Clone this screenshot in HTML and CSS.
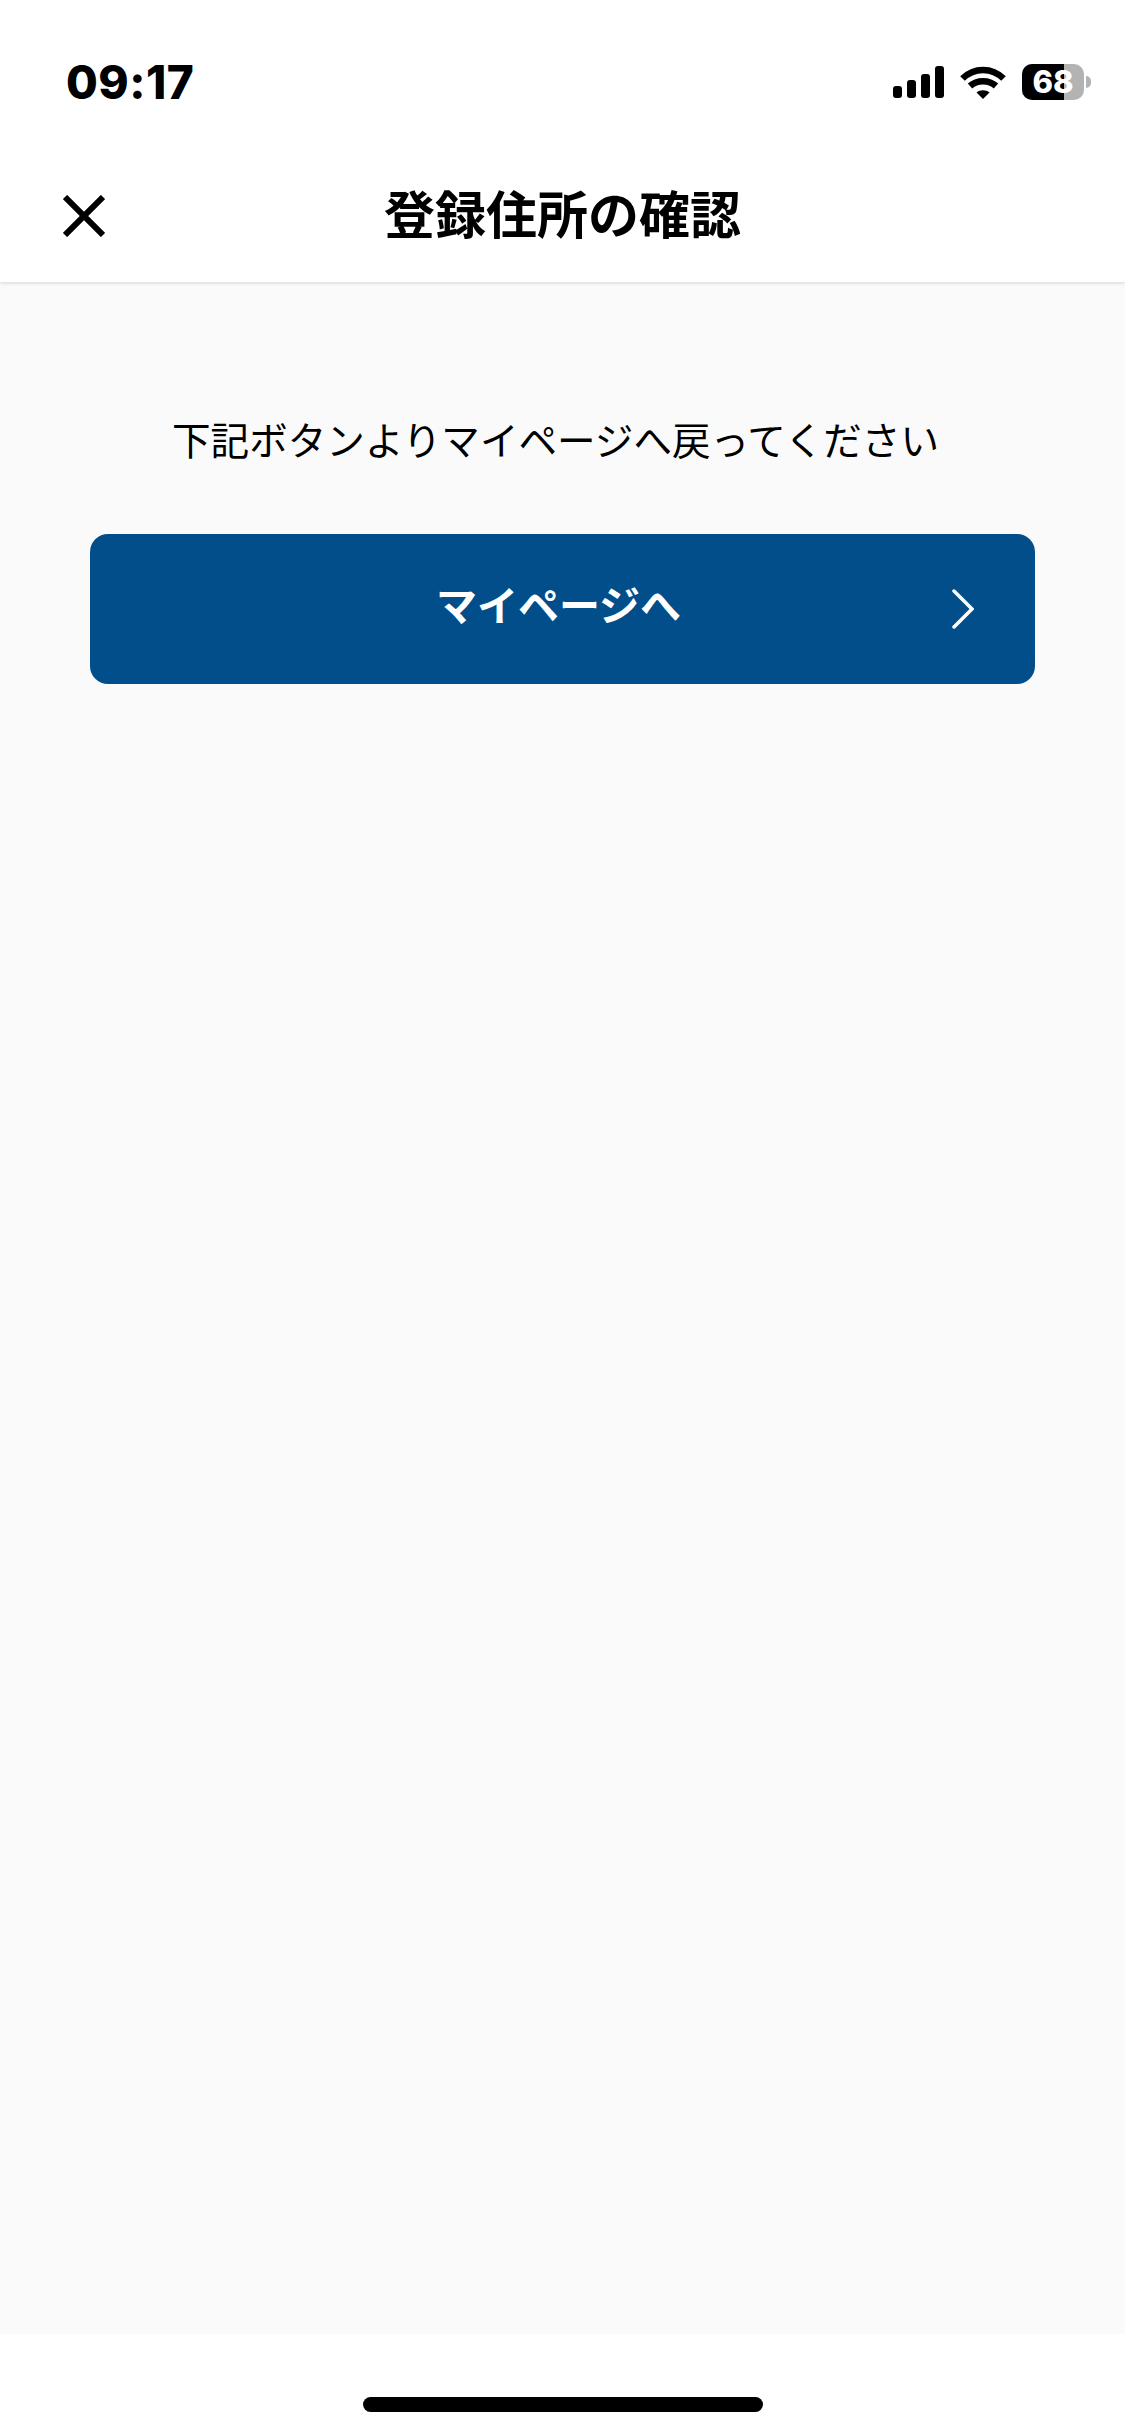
FILE: index.html
```html
<!DOCTYPE html>
<html lang="ja">
<head>
  <meta charset="UTF-8">
  <meta name="viewport" content="width=device-width, initial-scale=1.0">
  <title>登録住所の確認</title>
  <link rel="stylesheet" href="styles.css">
</head>
<body>
  <header class="top">
    <div class="status">
      <span class="time">09:17</span>
      <div class="status-icons">
        <svg class="signal" width="51" height="32" viewBox="0 0 51 32" fill="#000">
          <rect x="0" y="20" width="9" height="12" rx="3"/>
          <rect x="14" y="14" width="9" height="18" rx="3"/>
          <rect x="28" y="8" width="9" height="24" rx="3"/>
          <rect x="42" y="0" width="9" height="32" rx="3"/>
        </svg>
        <svg class="wifi" width="46" height="33" viewBox="0 0 46 33" fill="none" stroke="#000" stroke-width="6.5">
          <path d="M2.5 12.5C14 1 32 1 43.5 12.5"/>
          <path d="M10 20C17 13.5 29 13.5 36 20"/>
          <path d="M16.5 26.5C20 23.5 26 23.5 29.5 26.5L23 33Z" fill="#000" stroke="none"/>
        </svg>
        <div class="battery">
          <div class="battery-body">
            <div class="battery-fill"></div>
            <span class="battery-num">68</span>
          </div>
          <div class="battery-nub"></div>
        </div>
      </div>
    </div>
    <div class="nav">
      <svg class="close" width="42" height="42" viewBox="0 0 42 42" stroke="#000" stroke-width="6">
        <path d="M2 2L40 40M40 2L2 40"/>
      </svg>
      <h1 class="title">登録住所の確認</h1>
    </div>
  </header>

  <main class="content">
    <p class="message">下記ボタンよりマイページへ戻ってください</p>
    <a class="btn" href="#">
      <span class="btn-label">マイページへ</span>
      <svg class="chevron" width="22" height="40" viewBox="0 0 22 40" fill="none" stroke="#fff" stroke-width="3.5" stroke-linecap="round">
        <path d="M2 2L20 20L2 38"/>
      </svg>
    </a>
  </main>

  <footer class="bottom">
    <div class="home-bar"></div>
  </footer>
</body>
</html>
```

FILE: styles.css
```css
html, body {
  margin: 0;
  padding: 0;
}
body {
  width: 1125px;
  height: 2436px;
  display: flex;
  flex-direction: column;
  background: #fafafa;
  color: #000;
  font-family: "Noto Sans CJK JP", "Inter", sans-serif;
  overflow: hidden;
}
.top {
  height: 282px;
  background: #fff;
  box-shadow: 0 1px 4px rgba(0,0,0,0.16);
  position: relative;
}
.status {
  height: 163px;
  box-sizing: border-box;
  padding: 64px 34px 0 66px;
  display: flex;
  justify-content: space-between;
  align-items: flex-start;
}
.time {
  font-family: "Inter", sans-serif;
  font-weight: 800;
  font-size: 46px;
  line-height: 36px;
  letter-spacing: 0.5px;
}
.status-icons {
  display: flex;
  align-items: center;
  height: 36px;
}
.signal {
  margin-right: 16px;
}
.wifi {
  margin-right: 16px;
}
.battery {
  display: flex;
  align-items: center;
}
.battery-body {
  position: relative;
  width: 62px;
  height: 36px;
  border-radius: 10px;
  background: #b3b3b3;
  display: flex;
  align-items: center;
  justify-content: center;
}
.battery-fill {
  position: absolute;
  left: 0;
  top: 0;
  bottom: 0;
  width: 42px;
  border-radius: 10px 0 0 10px;
  background: #000;
}
.battery-num {
  position: relative;
  color: #fff;
  font-family: "Inter", sans-serif;
  font-weight: 800;
  font-size: 31px;
  line-height: 36px;
}
.battery-nub {
  width: 5px;
  height: 12px;
  margin-left: 2px;
  border-radius: 0 6px 6px 0;
  background: #b3b3b3;
}
.nav {
  height: 119px;
  display: grid;
  grid-template-columns: 1fr auto 1fr;
  align-items: start;
  padding: 0 63px;
}
.close {
  margin-top: 32px;
}
.title {
  grid-column: 2;
  margin: 0;
  font-size: 51px;
  font-weight: 700;
  line-height: 70px;
  margin-top: 14px;
}
.content {
  flex: 1;
  padding: 0 90px;
}
.message {
  margin: 128px 0 0;
  padding-right: 14px;
  text-align: center;
  font-size: 38.6px;
  line-height: 56px;
}
.btn {
  margin-top: 68px;
  height: 150px;
  border-radius: 18px;
  background: #014e8a;
  color: #fff;
  text-decoration: none;
  display: flex;
  align-items: center;
  justify-content: center;
  position: relative;
}
.btn-label {
  font-size: 41px;
  font-weight: 700;
  line-height: 56px;
  margin: -13px 8px 0 0;
}
.chevron {
  position: absolute;
  right: 61px;
  top: 55px;
}
.bottom {
  height: 102px;
  background: #fff;
  display: flex;
  justify-content: center;
}
.home-bar {
  width: 400px;
  height: 15px;
  margin-top: 63px;
  border-radius: 8px;
  background: #000;
}
```
